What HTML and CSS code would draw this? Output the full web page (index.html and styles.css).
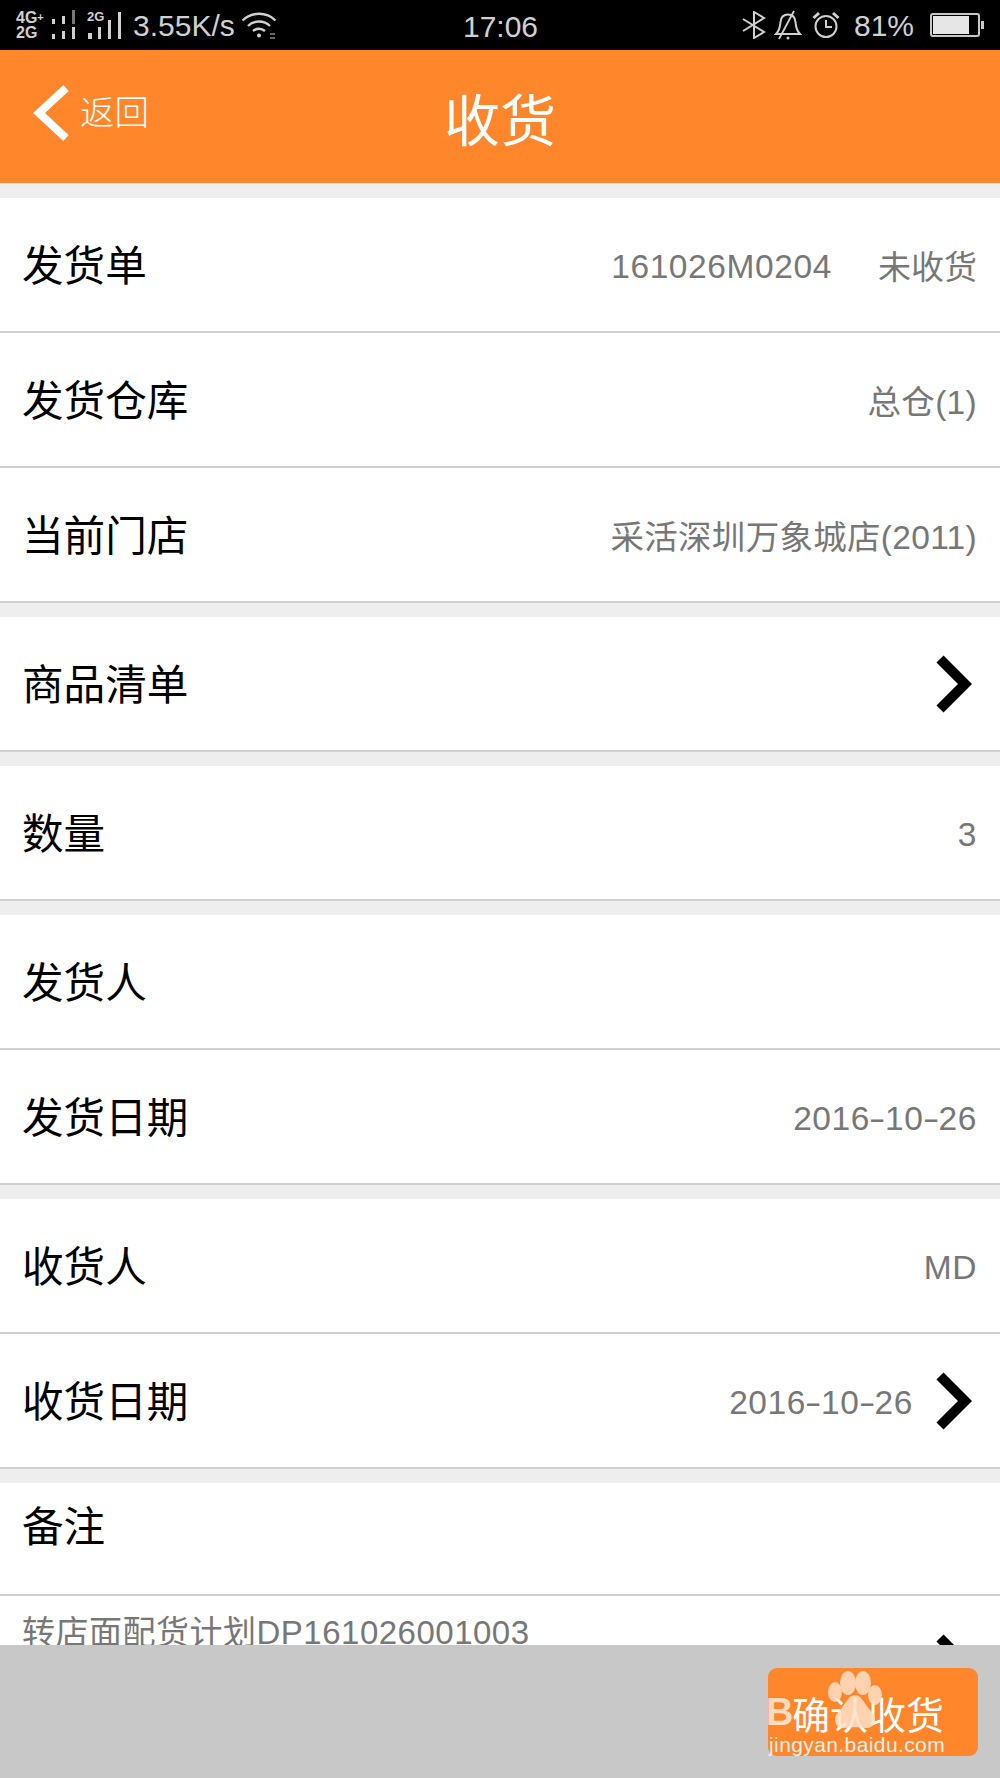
FILE: index.html
```html
<!DOCTYPE html>
<html lang="zh-CN">
<head>
  <meta charset="UTF-8" />
  <title>收货</title>
  <link rel="stylesheet" href="styles.css">
</head>
<body>
<div class="page">

  <div class="status">
    <div class="status-left">
      <div class="sim-labels"><span>4G<i>+</i></span><span>2G</span></div>
      <svg class="sig-a" width="30" height="30" viewBox="0 0 30 30" fill="#d0d0d0">
        <rect x="1" y="9" width="3" height="5"/><rect x="11" y="6" width="3" height="8"/><rect x="21" y="0" width="3" height="14" fill="#777"/>
        <rect x="1" y="24" width="3" height="5"/><rect x="11" y="21" width="3" height="8"/><rect x="21" y="17" width="3" height="12"/>
      </svg>
      <div class="sig-b">
        <span>2G</span>
        <svg width="36" height="27" viewBox="0 0 36 27" fill="#d0d0d0">
          <rect x="1" y="21" width="4" height="6"/><rect x="11" y="15" width="3" height="12"/><rect x="21" y="8" width="3" height="19"/><rect x="31" y="0" width="3" height="27"/>
        </svg>
      </div>
      <span class="speed">3.55K/s</span>
      <svg width="36" height="28" viewBox="0 0 36 28" fill="none" stroke="#d0d0d0" stroke-width="2.4">
        <path d="M1.500 9.500C10.500 .5 25.500 .5 34.500 9.500"/>
        <path d="M7 15C13 9 23 9 29 15"/>
        <path d="M12 20C15.500 17 20.500 17 24 20"/>
        <circle cx="18" cy="24.500" r="2" fill="#d0d0d0" stroke="none"/>
        <path d="M29 23h5M29 27h5" stroke="#888" stroke-width="1.600"/>
      </svg>
    </div>
    <div class="clock">17:06</div>
    <div class="status-right">
      <svg class="st-bt" width="24" height="28" viewBox="0 0 24 28" fill="none" stroke="#d0d0d0" stroke-width="2">
        <path d="M1 8L22 21L12 27V1L22 7L1 20"/>
      </svg>
      <svg class="st-bell" width="28" height="30" viewBox="0 0 28 30" fill="none" stroke="#d0d0d0" stroke-width="2">
        <path d="M2 24C6 20 6 16 6.500 12C7 7 10 4.500 14 4.500C18 4.500 21 7 21.500 12C22 16 22 20 26 24Z"/>
        <path d="M5 29L20 1" stroke-width="1.800"/>
        <circle cx="14" cy="28" r="1.500" fill="#d0d0d0" stroke="none"/>
      </svg>
      <svg class="st-alarm" width="28" height="28" viewBox="0 0 28 28" fill="none" stroke="#d0d0d0" stroke-width="2">
        <circle cx="14" cy="15.500" r="10.500"/>
        <path d="M14 9V16H20"/>
        <path d="M1.500 7L7 2M26.500 7L21 2" stroke-width="3"/>
      </svg>
      <span class="battery-pct">81%</span>
      <div class="battery"><div class="battery-fill"></div></div>
    </div>
  </div>

  <div class="header">
    <div class="back">
      <svg width="36" height="56" viewBox="0 0 36 56" fill="none" stroke="#fff" stroke-width="8">
        <path d="M33 3L6 28L33 53"/>
      </svg>
      <span>返回</span>
    </div>
    <div class="title">收货</div>
    <div></div>
  </div>

  <div class="content">
    <div class="group">
      <div class="row"><span class="label">发货单</span><span class="value num">161026M0204</span><span class="value state">未收货</span></div>
      <div class="row"><span class="label">发货仓库</span><span class="value">总仓(1)</span></div>
      <div class="row"><span class="label">当前门店</span><span class="value">采活深圳万象城店(2011)</span></div>
    </div>
    <div class="group">
      <div class="row"><span class="label">商品清单</span>
        <svg class="chev" width="36" height="58" viewBox="0 0 36 58" fill="none" stroke="#000" stroke-width="10"><path d="M4 4L29 29L4 54"/></svg>
      </div>
    </div>
    <div class="group">
      <div class="row"><span class="label">数量</span><span class="value num">3</span></div>
    </div>
    <div class="group">
      <div class="row"><span class="label">发货人</span></div>
      <div class="row"><span class="label">发货日期</span><span class="value num">2016<span class="dash">-</span>10<span class="dash">-</span>26</span></div>
    </div>
    <div class="group">
      <div class="row"><span class="label">收货人</span><span class="value num">MD</span></div>
      <div class="row"><span class="label">收货日期</span><span class="value num">2016<span class="dash">-</span>10<span class="dash">-</span>26</span>
        <svg class="chev" width="36" height="58" viewBox="0 0 36 58" fill="none" stroke="#000" stroke-width="10"><path d="M4 4L29 29L4 54"/></svg>
      </div>
    </div>
    <div class="group">
      <div class="row row-memo"><span class="label">备注</span></div>
      <div class="row row-note"><span class="note">转店面配货计划DP161026001003</span>
        <svg class="chev chev-note" width="36" height="58" viewBox="0 0 36 58" fill="none" stroke="#000" stroke-width="10"><path d="M4 4L29 29L4 54"/></svg>
      </div>
    </div>
  </div>

  <div class="footer">
    <button class="confirm">确认收货</button>
    <div class="watermark">
      <svg class="paw" width="60" height="66" viewBox="0 0 60 66" fill="#ffe0c8">
        <ellipse cx="7" cy="27" rx="7" ry="10"/>
        <ellipse cx="20" cy="18" rx="8" ry="12"/>
        <ellipse cx="35" cy="18" rx="8" ry="12"/>
        <ellipse cx="47" cy="30" rx="7" ry="10"/>
        <path d="M27 30C20 30 18 39 11 46C3 54 8 64 17 63C22 62 32 62 37 63C46 64 51 54 43 46C36 39 34 30 27 30Z"/>
      </svg>
      <span class="wm-b">B</span>
      <span class="wm-url">jingyan.baidu.com</span>
    </div>
  </div>

</div>
</body>
</html>
```

FILE: styles.css
```css
* { box-sizing: border-box; }
html, body { margin: 0; padding: 0; }
body {
  font-family: "Liberation Sans", "Noto Sans CJK SC", sans-serif;
  background: #eeeeee;
}
.page {
  width: 1000px;
  height: 1778px;
  display: flex;
  flex-direction: column;
  overflow: hidden;
}

/* status bar */
.status {
  height: 50px;
  flex: none;
  background: #000;
  color: #d0d0d0;
  display: grid;
  grid-template-columns: 1fr auto 1fr;
  align-items: center;
  padding: 0 15px 0 16px;
  font-size: 30px;
}
.status-left, .status-right { display: flex; align-items: center; }
.status-right { justify-content: flex-end; }
.sim-labels {
  display: flex;
  flex-direction: column;
  font-size: 16px;
  font-weight: 700;
  line-height: 15px;
  width: 35px;
}
.sim-labels i { font-style: normal; font-size: 11px; vertical-align: top; }
.sig-b { position: relative; margin-left: 6px; width: 36px; height: 27px; }
.sig-b svg { display: block; }
.sig-b span { position: absolute; left: 0; top: -2px; font-size: 13px; font-weight: 700; line-height: 13px; }
.speed { margin: 2px 6px 0 10px; }
.clock { width: 76px; text-align: center; margin-top: 4px; }
.st-bt { margin-right: 8px; }
.st-bell { margin-right: 10px; }
.st-alarm { margin-right: 14px; }
.battery-pct { margin: 2px 16px 0 0; }
.battery {
  width: 50px;
  height: 24px;
  margin-right: 5px;
  border: 2px solid #c8c8c8;
  border-radius: 3px;
  padding: 1px;
  position: relative;
}
.battery::after {
  content: "";
  position: absolute;
  right: -6px;
  top: 6px;
  width: 3px;
  height: 8px;
  background: #c8c8c8;
}
.battery-fill { width: 81%; height: 100%; background: #e6e6e6; }

/* header */
.header {
  height: 133px;
  flex: none;
  background: #ff862a;
  color: #fff;
  display: grid;
  grid-template-columns: 1fr auto 1fr;
  align-items: center;
}
.back {
  display: flex;
  align-items: center;
  gap: 11px;
  padding: 0 0 7px 33px;
  font-size: 34.500px;
  font-family: "Noto Sans CJK SC", sans-serif;
  font-weight: 300;
}
.back svg { display: block; }
.back span { margin-bottom: 6px; }
.title { font-size: 56px; font-family: "Noto Sans CJK SC", sans-serif; }

/* list */
.content { flex: 1; min-height: 0; overflow: hidden; padding-top: 15px; }
.group { margin-bottom: 14px; background: #fff; }
.row {
  height: 135px;
  border-bottom: 2px solid #d0d0d0;
  background: #fff;
  display: flex;
  align-items: center;
  padding: 0 23px;
}
.label {
  font-family: "Noto Sans CJK SC", sans-serif;
  font-size: 41.600px;
  color: #000;
  margin: 0 auto 4px -1px;
}
.value {
  font-size: 33.500px;
  color: #777;
  letter-spacing: 0.3px;
}
.num { margin-top: 5px; letter-spacing: 0.6px; }
.dash {
  display: inline-block;
  width: 15px;
  text-align: center;
  transform: scaleX(1.500);
}
.state { margin-left: 46px; letter-spacing: 0; font-size: 33px; }
.chev { display: block; margin: 0 5px 0 23px; }
.chev-note { margin-top: 24px; }
.row-memo { height: 113px; padding-bottom: 26px; }
.row-note { height: 100px; align-items: flex-start; padding-top: 14px; }
.note { font-size: 33px; color: #777; margin: 0 auto 0 -1px; line-height: 46px; letter-spacing: 0.5px; }

/* bottom bar */
.footer {
  height: 133px;
  flex: none;
  background: #c8c8c8;
  position: relative;
  display: flex;
  justify-content: flex-end;
  align-items: center;
  padding-right: 22px;
}
.confirm {
  width: 210px;
  height: 88px;
  border: 0;
  border-radius: 9px;
  background: #ff862a;
  color: #fff;
  font-family: "Noto Sans CJK SC", sans-serif;
  font-size: 38px;
  padding: 0 10px 0 0;
  margin-top: 1px;
}
.watermark {
  position: absolute;
  left: 768px;
  top: 20px;
  width: 232px;
  height: 100px;
  pointer-events: none;
}
.paw { position: absolute; left: 60px; top: 0; opacity: 0.85; }
.wm-b {
  position: absolute;
  left: -2px;
  top: 26px;
  font-weight: 700;
  font-size: 38px;
  color: #ffdcc0;
}
.wm-url {
  position: absolute;
  left: 1px;
  top: 68px;
  font-size: 21px;
  letter-spacing: 0.4px;
  color: #f2f2f2;
}
```
